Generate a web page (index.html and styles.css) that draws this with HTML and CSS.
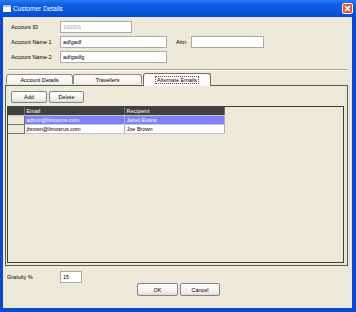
FILE: index.html
```html
<!DOCTYPE html>
<html>
<head>
  <meta charset="utf-8">
  <title>Customer Details</title>
  <link rel="stylesheet" href="styles.css">
</head>
<body>
<div class="window">
  <div class="titlebar">
    <span class="app-icon"></span>
    <span class="title">Customer Details</span>
    <span class="close">
      <svg width="9" height="9" viewBox="0 0 9 9"><path d="M2 2 L7 7 M7 2 L2 7" stroke="#fff" stroke-width="1.6"/></svg>
    </span>
  </div>
  <div class="content">
    <div class="fields">
      <label class="lbl">Account ID</label>
      <div class="input id disabled">100001</div>
      <label class="lbl">Account Name 1</label>
      <div class="input">adfgadf</div>
      <label class="attn">Attn:</label>
      <div class="input attn-input"></div>
      <label class="lbl">Account Name 2</label>
      <div class="input">adfgadfg</div>
    </div>
    <div class="sep"></div>
    <div class="tabs">
      <div class="tab t1">Account Details</div>
      <div class="tab t2">Travellers</div>
      <div class="tab t3 selected"><span class="focus">Alternate Emails</span></div>
    </div>
    <div class="panel">
      <div class="toolbar">
        <button class="btn add">Add</button>
        <button class="btn del">Delete</button>
      </div>
      <div class="scroll">
        <table class="grid">
          <thead>
            <tr><th class="rh"></th><th>Email</th><th>Recipient</th></tr>
          </thead>
          <tbody>
            <tr class="sel"><td class="rh"></td><td>admin@limosrus.com</td><td>Janet Evans</td></tr>
            <tr><td class="rh"></td><td>jbrown@limosrus.com</td><td>Joe Brown</td></tr>
          </tbody>
        </table>
      </div>
    </div>
    <div class="gratuity">
      <label class="glbl">Gratuity %</label>
      <div class="input gin">15</div>
    </div>
    <div class="actions">
      <button class="btn ok">OK</button>
      <button class="btn cancel">Cancel</button>
    </div>
  </div>
</div>
</body>
</html>
```
FILE: styles.css
```css
* {
  box-sizing: border-box;
}

html, body {
  margin: 0;
}

body {
  font-family: "Liberation Sans", Arial, sans-serif;
  font-size: 5.5px;
  color: #000;
}

.window {
  width: 356px;
  height: 312px;
  background: #0b47d8;
  display: flex;
  flex-direction: column;
}

.titlebar {
  height: 17px;
  background: linear-gradient(#2a7af2, #0a5de4 30%, #0553dc 80%, #0648c8);
  display: flex;
  align-items: center;
  padding: 0 3px;
  gap: 2px;
  color: #fff;
}

.app-icon {
  width: 8px;
  height: 7px;
  background: #fff;
  border-top: 2px solid #9ec2f5;
}

.title {
  font-size: 6.5px;
  margin-left: 0;
}

.close {
  margin-left: auto;
  width: 11px;
  height: 11px;
  background: #e0552f;
  border: 1px solid #fff;
  border-radius: 2px;
  display: flex;
  align-items: center;
  justify-content: center;
}

.content {
  flex: 1;
  margin: 0 4px 4px 3px;
  background: #ece9d8;
  display: flex;
  flex-direction: column;
}

.fields {
  display: grid;
  grid-template-columns: 49px 107px 9px 15px 73px;
  grid-auto-rows: 12px;
  row-gap: 3px;
  padding: 4px 0 0 8px;
  align-items: center;
}

.lbl {
  grid-column: 1;
}

.attn {
  grid-column: 4;
}

.input {
  height: 12px;
  border: 1px solid #a7abb0;
  background: #fff;
  padding: 0 2px;
  display: flex;
  align-items: center;
}

.input.id {
  width: 72px;
}

.disabled {
  color: #a0a0a0;
}

.sep {
  margin: 6px 4px 0 5px;
  height: 2px;
  border-top: 1px solid #aca899;
  border-bottom: 1px solid #fff;
}

.tabs {
  display: flex;
  align-items: flex-end;
  height: 12px;
  margin: 2px 0 0 3px;
  position: relative;
  z-index: 1;
}

.tab {
  height: 10px;
  border: 1px solid #8c8a80;
  border-bottom: none;
  border-radius: 3px 3px 0 0;
  background: linear-gradient(#fefefe, #f0efe9);
  display: flex;
  align-items: center;
  justify-content: center;
  margin-bottom: 1px;
}

.t1 { width: 67px; }
.t2 { width: 69px; }
.t3 { width: 68px; margin-left: 1px; }

.tab.selected {
  height: 13px;
  margin-bottom: -1px;
  background: #fcfcfb;
  border-color: #6f6d64;
}

.focus {
  outline: 1px dotted #555;
  padding: 0 1px;
}

.panel {
  height: 181px;
  margin: 0 4px 0 2px;
  border: 1px solid #5c5a52;
  padding: 5px 3px 2px 1px;
  display: flex;
  flex-direction: column;
}

.toolbar {
  display: flex;
  gap: 2px;
  padding-left: 4px;
}

.btn {
  font-family: inherit;
  font-size: 5.5px;
  height: 12px;
  padding: 0;
  border: 1px solid #7b8794;
  border-radius: 2px;
  background: linear-gradient(#fff, #f2f1ec 70%, #dedbd0);
  color: #000;
}

.add { width: 36px; }
.del { width: 35px; }

.scroll {
  flex: 1;
  margin-top: 3px;
  border: 1px solid #3f3f3a;
}

.grid {
  border-collapse: collapse;
  table-layout: fixed;
  width: 216px;
}

.grid th,
.grid td {
  height: 9px;
  padding: 0 0 0 2px;
  text-align: left;
  font-weight: normal;
  white-space: nowrap;
  border-right: 1px solid #b0b0b0;
  border-bottom: 1px solid #c8c8c8;
}

.grid th {
  height: 8px;
  background: #404040;
  color: #fff;
  border-right-color: #707070;
}

.grid th.rh,
.grid td.rh {
  width: 16px;
}

.grid th:nth-child(2),
.grid th:nth-child(3) {
  width: 100px;
}

.grid td {
  background: #fff;
}

.grid td.rh {
  background: #ece9d8;
  border-right: 1px solid #707070;
  border-bottom: 1px solid #707070;
}

.grid tr.sel td {
  background: #8080ff;
  color: #fff;
}

.grid tr.sel td.rh {
  background: #ece9d8;
}

.gratuity {
  display: flex;
  align-items: center;
  margin: 5px 0 0 4px;
}

.glbl {
  width: 53px;
}

.gin {
  width: 22px;
}

.actions {
  display: flex;
  justify-content: center;
  gap: 2px;
  padding-left: 2px;
}

.ok { width: 41px; height: 13px; }
.cancel { width: 40px; height: 13px; }
```
